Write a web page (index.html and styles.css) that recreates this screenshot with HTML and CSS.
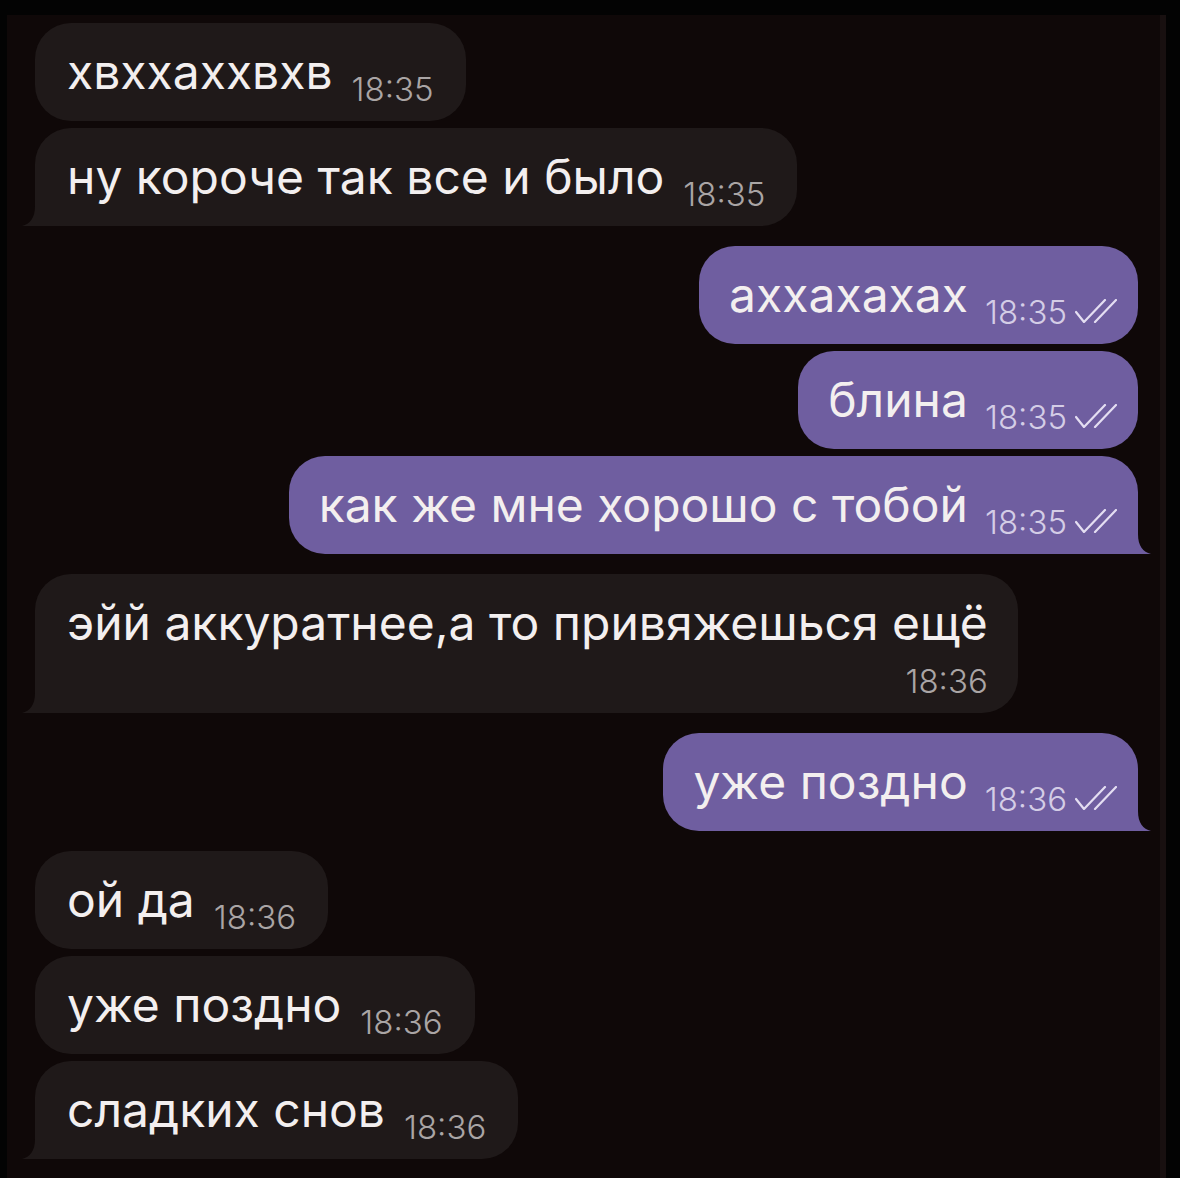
FILE: index.html
```html
<!DOCTYPE html>
<html lang="ru">
<head>
<meta charset="utf-8">
<title>Чат</title>
<link rel="stylesheet" href="styles.css">
</head>
<body>
<div class="screen">
  <div class="chat">
    <div class="group in">
      <div class="bubble"><span class="text">хвххаххвхв</span><span class="time">18:35</span></div>
      <div class="bubble has-tail"><span class="text">ну короче так все и было</span><span class="time">18:35</span>
        <svg class="tail" viewBox="0 0 44 32" width="44" height="32"><path d="M13,0 L13,12 C13,24 8,30 0,32 L44,32 L44,0 Z"/></svg>
      </div>
    </div>

    <div class="group out">
      <div class="bubble"><span class="text">аххахахах</span><span class="time">18:35</span><svg class="check" viewBox="0 0 42 24" width="42" height="24"><path d="M1,13 L9,23 L30,1 M20,23 L41,1"/></svg></div>
      <div class="bubble"><span class="text">блина</span><span class="time">18:35</span><svg class="check" viewBox="0 0 42 24" width="42" height="24"><path d="M1,13 L9,23 L30,1 M20,23 L41,1"/></svg></div>
      <div class="bubble has-tail"><span class="text">как же мне хорошо с тобой</span><span class="time">18:35</span><svg class="check" viewBox="0 0 42 24" width="42" height="24"><path d="M1,13 L9,23 L30,1 M20,23 L41,1"/></svg>
        <svg class="tail" viewBox="0 0 44 32" width="44" height="32"><path d="M31,0 L31,12 C31,24 36,30 44,32 L0,32 L0,0 Z"/></svg>
      </div>
    </div>

    <div class="group in">
      <div class="bubble has-tail stacked"><span class="text">эйй аккуратнее,а то привяжешься ещё</span><span class="time">18:36</span>
        <svg class="tail" viewBox="0 0 44 32" width="44" height="32"><path d="M13,0 L13,12 C13,24 8,30 0,32 L44,32 L44,0 Z"/></svg>
      </div>
    </div>

    <div class="group out">
      <div class="bubble has-tail"><span class="text">уже поздно</span><span class="time">18:36</span><svg class="check" viewBox="0 0 42 24" width="42" height="24"><path d="M1,13 L9,23 L30,1 M20,23 L41,1"/></svg>
        <svg class="tail" viewBox="0 0 44 32" width="44" height="32"><path d="M31,0 L31,12 C31,24 36,30 44,32 L0,32 L0,0 Z"/></svg>
      </div>
    </div>

    <div class="group in">
      <div class="bubble"><span class="text">ой да</span><span class="time">18:36</span></div>
      <div class="bubble"><span class="text">уже поздно</span><span class="time">18:36</span></div>
      <div class="bubble has-tail"><span class="text">сладких снов</span><span class="time">18:36</span>
        <svg class="tail" viewBox="0 0 44 32" width="44" height="32"><path d="M13,0 L13,12 C13,24 8,30 0,32 L44,32 L44,0 Z"/></svg>
      </div>
    </div>
  </div>
</div>
</body>
</html>
```

FILE: styles.css
```css
html, body {
  margin: 0;
  padding: 0;
  background: #030303;
}

body {
  font-family: "Inter", "Liberation Sans", sans-serif;
  -webkit-font-smoothing: antialiased;
}

.screen {
  margin: 15px 0 0 7px;
  width: 1153px;
  min-height: 1163px;
  background: #0f0808;
  border-right: 6px solid #181010;
}

.chat {
  display: flex;
  flex-direction: column;
  gap: 20px;
  padding: 8px 22px 0 28px;
}

.group {
  display: flex;
  flex-direction: column;
  gap: 7px;
}

.group.in { align-items: flex-start; }
.group.out { align-items: flex-end; }

.bubble {
  position: relative;
  display: flex;
  align-items: flex-end;
  padding: 24px 32px;
  border-radius: 36px;
  background: #1f1919;
}

.out .bubble {
  background: #6f5ea0;
  padding: 24px 21px 24px 30px;
}

.text {
  font-size: 48px;
  line-height: 50px;
  color: #f3efef;
  white-space: nowrap;
}

.time {
  font-size: 33px;
  font-weight: 300;
  line-height: 16px;
  margin-left: 19px;
  color: #aaa5a5;
  white-space: nowrap;
}

.out .time {
  margin-left: 17px;
  color: #d4cde6;
}

.check {
  margin-left: 8px;
  margin-bottom: -3px;
  fill: none;
  stroke: #e4def2;
  stroke-width: 2.2;
  stroke-linecap: round;
  stroke-linejoin: round;
}

.tail {
  position: absolute;
  bottom: 0;
}

.in .has-tail { border-bottom-left-radius: 8px; }
.in .tail { left: -13px; fill: #1f1919; }

.out .has-tail { border-bottom-right-radius: 8px; }
.out .tail { right: -13px; fill: #6f5ea0; }

.stacked {
  flex-direction: column;
  align-items: stretch;
  padding: 24px 30px 14px 32px;
}

.stacked .time {
  align-self: flex-end;
  line-height: 36px;
  margin: 15px 0 0 0;
}
```
